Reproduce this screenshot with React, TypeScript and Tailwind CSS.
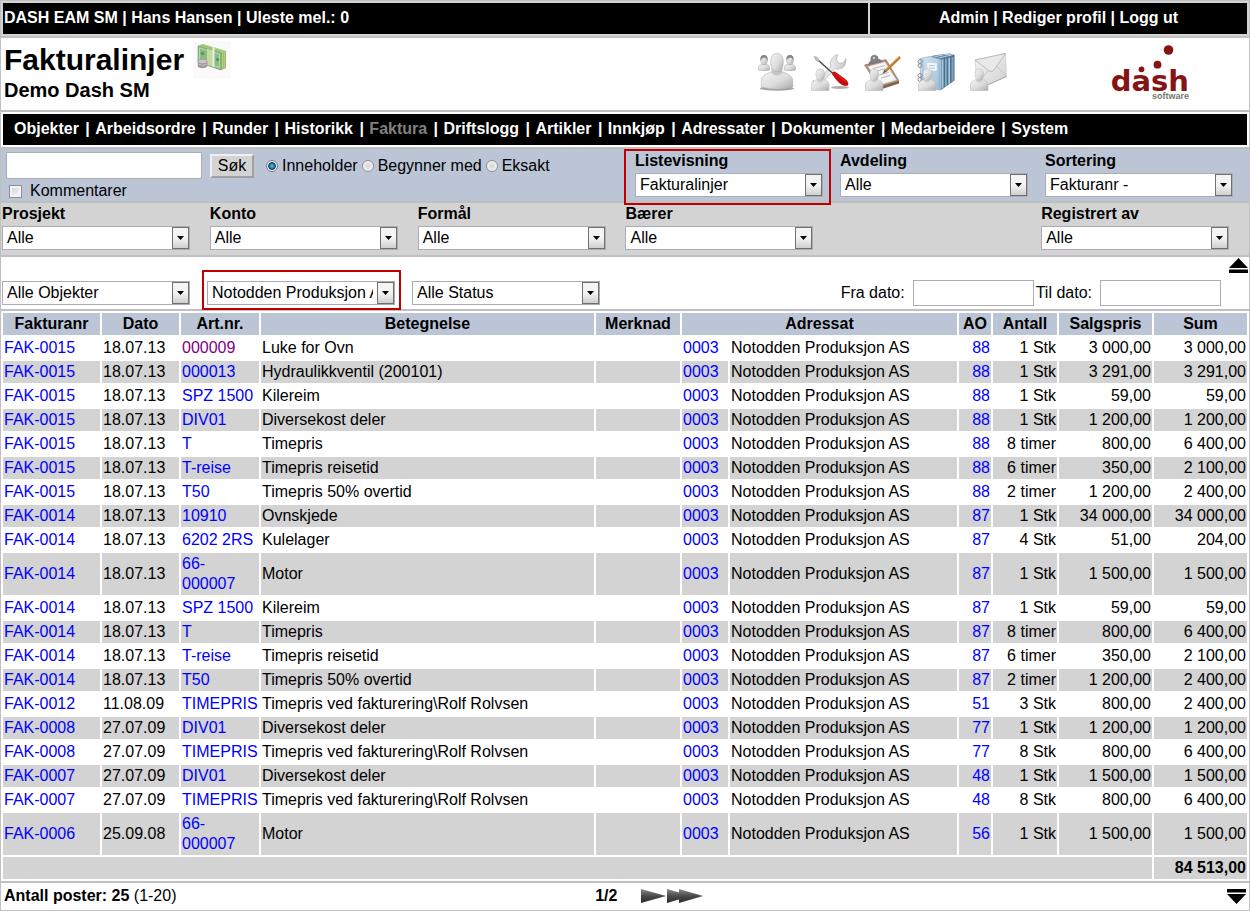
import type { ReactNode } from 'react';

const MENU = [
  'Objekter', 'Arbeidsordre', 'Runder', 'Historikk', 'Faktura', 'Driftslogg', 'Artikler',
  'Innkjøp', 'Adressater', 'Dokumenter', 'Medarbeidere', 'System',
];

type Row = [string, string, string, string, string, string, string, string];

const ROWS: Row[] = [
  ['FAK-0015', '18.07.13', '000009', 'Luke for Ovn', '88', '1 Stk', '3 000,00', '3 000,00'],
  ['FAK-0015', '18.07.13', '000013', 'Hydraulikkventil (200101)', '88', '1 Stk', '3 291,00', '3 291,00'],
  ['FAK-0015', '18.07.13', 'SPZ 1500', 'Kilereim', '88', '1 Stk', '59,00', '59,00'],
  ['FAK-0015', '18.07.13', 'DIV01', 'Diversekost deler', '88', '1 Stk', '1 200,00', '1 200,00'],
  ['FAK-0015', '18.07.13', 'T', 'Timepris', '88', '8 timer', '800,00', '6 400,00'],
  ['FAK-0015', '18.07.13', 'T-reise', 'Timepris reisetid', '88', '6 timer', '350,00', '2 100,00'],
  ['FAK-0015', '18.07.13', 'T50', 'Timepris 50% overtid', '88', '2 timer', '1 200,00', '2 400,00'],
  ['FAK-0014', '18.07.13', '10910', 'Ovnskjede', '87', '1 Stk', '34 000,00', '34 000,00'],
  ['FAK-0014', '18.07.13', '6202 2RS', 'Kulelager', '87', '4 Stk', '51,00', '204,00'],
  ['FAK-0014', '18.07.13', '66-000007', 'Motor', '87', '1 Stk', '1 500,00', '1 500,00'],
  ['FAK-0014', '18.07.13', 'SPZ 1500', 'Kilereim', '87', '1 Stk', '59,00', '59,00'],
  ['FAK-0014', '18.07.13', 'T', 'Timepris', '87', '8 timer', '800,00', '6 400,00'],
  ['FAK-0014', '18.07.13', 'T-reise', 'Timepris reisetid', '87', '6 timer', '350,00', '2 100,00'],
  ['FAK-0014', '18.07.13', 'T50', 'Timepris 50% overtid', '87', '2 timer', '1 200,00', '2 400,00'],
  ['FAK-0012', '11.08.09', 'TIMEPRIS', 'Timepris ved fakturering\\Rolf Rolvsen', '51', '3 Stk', '800,00', '2 400,00'],
  ['FAK-0008', '27.07.09', 'DIV01', 'Diversekost deler', '77', '1 Stk', '1 200,00', '1 200,00'],
  ['FAK-0008', '27.07.09', 'TIMEPRIS', 'Timepris ved fakturering\\Rolf Rolvsen', '77', '8 Stk', '800,00', '6 400,00'],
  ['FAK-0007', '27.07.09', 'DIV01', 'Diversekost deler', '48', '1 Stk', '1 500,00', '1 500,00'],
  ['FAK-0007', '27.07.09', 'TIMEPRIS', 'Timepris ved fakturering\\Rolf Rolvsen', '48', '8 Stk', '800,00', '6 400,00'],
  ['FAK-0006', '25.09.08', '66-000007', 'Motor', '56', '1 Stk', '1 500,00', '1 500,00'],
];

function Select({ id, value, label }: { id: string; value: string; label?: string }) {
  return (
    <div className="relative h-6 w-[188px]">
      <select
        id={id}
        aria-label={label}
        defaultValue={value}
        className="block h-6 w-full appearance-none border border-[#abadb3] bg-white pr-[21px] pl-1 text-base leading-5 text-black"
      >
        <option>{value}</option>
      </select>
      <span className="pointer-events-none absolute top-px right-px flex h-[22px] w-[17px] items-center justify-center border border-[#707070] bg-linear-to-b from-[#f4f4f4] from-50% to-[#cfcfcf]">
        <svg width="7" height="4" viewBox="0 0 7 4" aria-hidden="true">
          <path d="M0 0h7L3.5 4z" fill="#000" />
        </svg>
      </span>
    </div>
  );
}

function Field({ id, label, value, children }: { id: string; label: string; value: string; children?: ReactNode }) {
  return (
    <div className="relative flex flex-col items-start gap-0.5">
      <label htmlFor={id} className="font-bold">{label}</label>
      <Select id={id} value={value} />
      {children}
    </div>
  );
}

function Radio({ label, checked }: { label: string; checked?: boolean }) {
  return (
    <label className="flex items-center gap-1">
      <input
        type="radio"
        name="match"
        defaultChecked={checked}
        className="size-3 appearance-none rounded-full border border-[#8e8f8f] bg-radial from-[#d2d6da] to-[#fafafa] shadow-[inset_0_0_0_1px_#f4f4f4] checked:border-[#6b7f92] checked:from-[#4fb4dc] checked:from-10% checked:via-[#123f63] checked:via-50% checked:to-[#eef2f5] checked:to-60%"
      />
      {label}
    </label>
  );
}

function Gradients() {
  return (
    <svg width="0" height="0" className="absolute" aria-hidden="true">
      <defs>
        <linearGradient id="skin" x1="0" y1="0" x2="1" y2="1">
          <stop offset="0" stopColor="#f4f4f4" />
          <stop offset="0.55" stopColor="#dcdcdc" />
          <stop offset="1" stopColor="#a9a9a9" />
        </linearGradient>
        <linearGradient id="metal" x1="0" y1="0" x2="1" y2="0">
          <stop offset="0" stopColor="#c4c4c4" />
          <stop offset="0.5" stopColor="#ececec" />
          <stop offset="1" stopColor="#c6c6c6" />
        </linearGradient>
        <linearGradient id="cover" x1="0" y1="0" x2="1" y2="1">
          <stop offset="0" stopColor="#d3e4f0" />
          <stop offset="1" stopColor="#9dc0d8" />
        </linearGradient>
        <linearGradient id="paper" x1="0" y1="0" x2="1" y2="1">
          <stop offset="0" stopColor="#f6f6f6" />
          <stop offset="1" stopColor="#d0d0d0" />
        </linearGradient>
        <linearGradient id="play" x1="0" y1="0" x2="0" y2="1">
          <stop offset="0" stopColor="#8a8a8a" />
          <stop offset="0.5" stopColor="#4a4a4a" />
          <stop offset="1" stopColor="#2c2c2c" />
        </linearGradient>
      </defs>
    </svg>
  );
}

function SmallPerson() {
  return (
    <g stroke="#b4b4b4" strokeWidth="0.5">
      <path d="M0.500 37.500V32q0-4 5.500-5.500h6.500q5.500 1.500 5.500 5.500v5.500z" fill="url(#skin)" />
      <path d="M6 24v4q3.200 3 6.400 0v-4z" fill="#cfcfcf" stroke="none" />
      <path d="M9.200 16q4.300 0 4.300 5 0 6-4.300 6.500Q5 27 5 21q0-5 4.200-5z" fill="url(#skin)" />
    </g>
  );
}

function PeopleIcon() {
  return (
    <svg width="38" height="38" viewBox="0 0 38 38" aria-hidden="true">
      <ellipse cx="19" cy="35.500" rx="17" ry="2.200" fill="#7d7d7d" opacity="0.7" />
      <g stroke="#a4a4a4" strokeWidth="0.5">
        <path d="M0.500 17v-2q0-3 3.800-4h3.400q4 1 4 4v2q-5.500 1.500-11.200 0z" fill="url(#skin)" />
        <ellipse cx="6" cy="7" rx="3.300" ry="4.700" fill="url(#skin)" />
        <path d="M2.500 7.500Q1.800 2 6 2t3.500 5.500Q8 4.500 6.500 4.500 4 4.500 2.500 7.500z" fill="#858585" stroke="none" />
        <path d="M26.300 17v-2q0-3 3.800-4h3.400q4 1 4 4v2q-5.500 1.500-11.200 0z" fill="url(#skin)" />
        <ellipse cx="32" cy="7" rx="3.300" ry="4.700" fill="url(#skin)" />
        <path d="M28.500 7.500Q27.800 2 32 2t3.500 5.500Q34 4.500 32.500 4.500 30 4.500 28.500 7.500z" fill="#858585" stroke="none" />
        <path d="M3.300 34v-6.500q0-5.500 9.700-8.500h12q9.700 3 9.700 8.500V34q-15.700 4.500-31.400 0z" fill="url(#skin)" />
        <path d="M13.500 15v5q5.500 5 11 0v-5z" fill="#c6c6c6" stroke="none" />
        <path d="M19 0.500q6.300 0 6.300 8.500 0 9.500-6.300 10-6.300-0.500-6.300-10 0-8.500 6.300-8.500z" fill="url(#skin)" />
      </g>
    </svg>
  );
}

function ToolsIcon() {
  return (
    <svg width="38" height="38" viewBox="0 0 38 38" aria-hidden="true">
      <ellipse cx="29" cy="34.500" rx="9" ry="1.500" fill="#8a8a8a" opacity="0.7" />
      <path
        d="M3 31L19.500 14q-1.500-5.500 2-9 1.500-3 5-3.500l-1 5.500 2.500 3.500 4.500-1L35 5.500q0 3-0.500 5.500-2 4.500-6 5-2.500 0.500-4.500-0.500L7.500 34z"
        fill="url(#metal)" stroke="#adadad" strokeWidth="0.600"
      />
      <path d="M2 28l2.500 2" stroke="#444" strokeWidth="1.400" />
      <path d="M7 7l15.500 14" stroke="#4d4d4d" strokeWidth="1.500" />
      <path d="M3.500 3.500l2.500 0.800 2.500 3.200-1.500 1.200-3-2.500z" fill="#c2c2c2" stroke="#8f8f8f" strokeWidth="0.500" />
      <path d="M21 21q0-2.500 3-2.500l11.500 8.500q2.500 3 1.500 5.500l-3 0.500q-6-1-13-12z" fill="#c80d0d" />
      <path d="M24 20l11.500 9" stroke="#e22" strokeWidth="1" />
      <SmallPerson />
    </svg>
  );
}

function ClipboardIcon() {
  return (
    <svg width="38" height="38" viewBox="0 0 38 38" aria-hidden="true">
      <path d="M0.500 12L22 6.500 35 28 15 34z" fill="#b0917c" stroke="#8a6a54" strokeWidth="0.600" />
      <path d="M35 28v2.500L15 37v-3z" fill="#80604b" />
      <path d="M4 13.500L21 9l11.500 18-17 5z" fill="#f7f7f7" stroke="#c9c9c9" strokeWidth="0.500" />
      <path d="M9 15.500l12-3M11 18.500l10-2.800M15 22l9.500-2.500M17 25l9-2.500" stroke="#b8b8b8" strokeWidth="1" />
      <path d="M5 11.500q-0.500-2.500 2-3.800-1-5 3-5.500 4.500 0 4 4 3-0.200 3.500 2.300z" fill="#808080" stroke="#606060" strokeWidth="0.500" />
      <circle cx="10" cy="5" r="1.200" fill="#d0d0d0" />
      <path d="M36 4L21.500 18" stroke="#b8742b" strokeWidth="2.600" />
      <path d="M35.500 3.600L21 17.500" stroke="#e5a259" strokeWidth="1" />
      <path d="M20.500 16.500l2 2.200-4 2z" fill="#555" />
      <g transform="translate(1 0)"><SmallPerson /></g>
    </svg>
  );
}

function BooksIcon() {
  return (
    <svg width="38" height="38" viewBox="0 0 38 38" aria-hidden="true">
      <path d="M16 2.500L33 0.500 37.500 2v25.500L24 37z" fill="#4a6f8a" />
      <path d="M12 3.500L31 0.800l6 1-13 4z" fill="#b7d0e0" />
      <path d="M24.500 6.500l2-0.500v28.500l-2 1.500z" fill="#a9c9de" />
      <path d="M28 5.800l1.800-0.400v27L28 33.800z" fill="#86adc8" />
      <path d="M31.300 5l1.700-0.400v25.600l-1.700 1.200z" fill="#a9c9de" />
      <path d="M34.500 4.200L36.500 3.800v23.800l-2 1.400z" fill="#7ba3bf" />
      <path d="M15 3.500l12 2.500M20 2.800l11 2.300M25 2l10 2" stroke="#55809e" strokeWidth="0.900" />
      <path d="M3 5.500l10-2 11 3v30.500L4 35z" fill="url(#cover)" stroke="#7fa5bf" strokeWidth="0.600" />
      <path d="M6 6v29M22 7v29.500" stroke="#84aac4" strokeWidth="0.700" />
      <path d="M10 9.500l10 0.500v8l-10-0.500z" fill="#f4f8fa" stroke="#b5cad8" strokeWidth="0.400" />
      <path d="M12 12.500l6 0.300M12 15l6 0.300" stroke="#9cb5c5" strokeWidth="0.800" />
      <g fill="none" stroke="#808890" strokeWidth="0.900">
        <circle cx="3" cy="8.500" r="2" /><circle cx="3" cy="12.500" r="2" />
        <circle cx="3" cy="22.500" r="2" /><circle cx="3" cy="26.500" r="2" />
      </g>
      <g transform="translate(1 0)"><SmallPerson /></g>
    </svg>
  );
}

function MailIcon() {
  return (
    <svg width="38" height="38" viewBox="0 0 38 38" aria-hidden="true">
      <path d="M5 7L35.500 0.500l1 23L13 34 7 30z" fill="url(#paper)" stroke="#c4c4c4" strokeWidth="0.600" />
      <path d="M7 30l12-13M36.500 23.500L26 12.500" stroke="#bdbdbd" strokeWidth="0.800" />
      <path d="M5 7L35.500 0.500 24 17q-2 2.500-4.500 1z" fill="#e9e9e9" stroke="#b0b0b0" strokeWidth="0.800" />
      <path d="M13 34l23.500-10.500" stroke="#a8a8a8" strokeWidth="1" />
      <SmallPerson />
    </svg>
  );
}

function MoneyIcon() {
  return (
    <svg width="38" height="37" viewBox="0 0 38 37" aria-hidden="true">
      <rect width="38" height="37" fill="#fafafa" />
      <path d="M5 5l5-2 23 7v17l-5 2L5 21z" fill="#9bc070" />
      <path d="M5 5l5-2 23 7-5 2z" fill="#bcd694" />
      <path d="M6.500 4.300l22.500 7M8 3.800l22.500 7" stroke="#86ab5a" strokeWidth="0.500" />
      <path d="M28 12l5-2v17l-5 2z" fill="#97bb66" />
      <path d="M29.500 11.500v17M31.300 10.800v17" stroke="#c4db9a" strokeWidth="0.700" />
      <path d="M5 5l23 7v17L5 21z" fill="#8dbb86" stroke="#6b9e5b" strokeWidth="0.600" />
      <path d="M6.500 7l20 6v13.500l-20-6.500z" fill="none" stroke="#c2dfb8" strokeWidth="0.800" />
      <path d="M14 7.800l6 1.800v16l-6-2z" fill="#c6dc98" />
      <path d="M19.500 6l2 0.700V26l-2-0.600z" fill="#e0eef2" />
      <circle cx="9.500" cy="12.500" r="1.800" fill="#5c9662" />
      <circle cx="24.500" cy="18.500" r="1.800" fill="#5c9662" />
      <path d="M5 20.500v5q4.500 3 9 0v-5z" fill="#a898a6" stroke="#8b7b8a" strokeWidth="0.500" />
      <ellipse cx="9.500" cy="20.500" rx="4.500" ry="2.200" fill="#cfc3cc" stroke="#93858f" strokeWidth="0.500" />
      <path d="M5 23q4.500 3 9 0" stroke="#d9d0d6" strokeWidth="0.600" fill="none" />
    </svg>
  );
}

function Logo() {
  return (
    <svg width="82" height="57" viewBox="0 0 82 57" role="img" aria-label="dash software">
      <circle cx="60.500" cy="6" r="4.800" fill="#861414" />
      <circle cx="49.500" cy="20.700" r="3.900" fill="#861414" />
      <circle cx="33.500" cy="25.300" r="2.900" fill="#861414" />
      <text x="81" y="47" textAnchor="end" fontFamily="DejaVu Sans" fontWeight="700" fontSize="29" fill="#861414">dash</text>
      <text x="81" y="55" textAnchor="end" fontFamily="Liberation Sans" fontWeight="700" fontSize="9" fill="#77776b">software</text>
    </svg>
  );
}

const SHORTCUTS: { label: string; icon: ReactNode }[] = [
  { label: 'Medarbeidere', icon: <PeopleIcon /> },
  { label: 'Arbeidsordre', icon: <ToolsIcon /> },
  { label: 'Runder', icon: <ClipboardIcon /> },
  { label: 'Dokumenter', icon: <BooksIcon /> },
  { label: 'Meldinger', icon: <MailIcon /> },
];

export default function App() {
  return (
    <div className="border border-[#c0c0c0] bg-white font-['Liberation_Sans',Arial,sans-serif] text-base leading-5 text-black">
      <Gradients />

      <div className="flex gap-0.5 border-b-2 border-[#c0c0c0] bg-[#d3d3d3] p-0.5 font-bold text-white">
        <div className="flex-1 bg-black px-px pt-[5px] pb-1.5">DASH EAM SM | Hans Hansen | Uleste mel.: 0</div>
        <nav className="w-[30.3%] bg-black pt-[5px] pb-1.5 text-center">
          <a href="#admin">Admin</a> | <a href="#profil">Rediger profil</a> | <a href="#logout">Logg ut</a>
        </nav>
      </div>

      <header className="flex items-start border-b-2 border-[#c0c0c0] pr-[59px] pb-2 pl-[3px]">
        <div className="flex-1">
          <div className="flex items-start gap-[9px]">
            <h1 className="pt-1 text-[30px] leading-9 font-bold">Fakturalinjer</h1>
            <span className="pt-[3px]"><MoneyIcon /></span>
          </div>
          <h2 className="text-xl leading-6 font-bold">Demo Dash SM</h2>
        </div>
        <nav className="flex gap-[15px] pt-[15px]">
          {SHORTCUTS.map((s) => (
            <a key={s.label} href="#snarvei" aria-label={s.label}>{s.icon}</a>
          ))}
        </nav>
        <div className="pt-1.5 pl-[100px]"><Logo /></div>
      </header>

      <div className="border-b-2 border-[#c0c0c0] p-0.5">
        <nav className="bg-black pt-[5px] pb-1.5 pl-[11px] font-bold text-white">
          {MENU.map((item, i) => (
            <span key={item}>
              {i > 0 && <span className="mr-px ml-0.5"> | </span>}
              <a href="#meny" className={item === 'Faktura' ? 'text-[#808080]' : ''}>{item}</a>
            </span>
          ))}
        </nav>
      </div>

      <div className="flex items-start border-b-2 border-[#c0c0c0] bg-[#bbc5d6] pr-4">
        <div className="flex-1 pt-[3px] pl-[5px]">
          <div className="flex items-center">
            <input type="text" aria-label="Søketekst" className="h-[27px] w-[196px] border border-[#abadb3] bg-white px-1" />
            <button type="button" className="ml-2 h-6 w-11 border-2 border-t-[#f0f0f0] border-r-[#a0a0a0] border-b-[#a0a0a0] border-l-[#f0f0f0] bg-[#d3d3d3] leading-5">
              Søk
            </button>
            <div className="ml-3 flex gap-1">
              <Radio label="Inneholder" checked />
              <Radio label="Begynner med" />
              <Radio label="Eksakt" />
            </div>
          </div>
          <label className="flex items-center gap-2 pt-0.5 pl-[3px]">
            <input
              type="checkbox"
              className="size-[13px] appearance-none border border-[#8e8f8f] bg-linear-to-br from-[#cfd3d8] to-[#f8f8f8] shadow-[inset_0_0_0_2px_#f4f4f4] checked:bg-[#123f63]"
            />
            Kommentarer
          </label>
        </div>
        <div className="flex gap-[17px] pt-0.5 pb-1">
          <Field id="listevisning" label="Listevisning" value="Fakturalinjer">
            <span className="pointer-events-none absolute -top-0.5 -right-2 -bottom-2 -left-[11px] z-10 border-2 border-[#c00000]" />
          </Field>
          <Field id="avdeling" label="Avdeling" value="Alle" />
          <Field id="sortering" label="Sortering" value="Fakturanr -" />
        </div>
      </div>

      <div className="grid grid-cols-6 border-b-2 border-[#c0c0c0] bg-[#d3d3d3] pt-px pb-[5px] pl-px">
        <Field id="prosjekt" label="Prosjekt" value="Alle" />
        <Field id="konto" label="Konto" value="Alle" />
        <Field id="formal" label="Formål" value="Alle" />
        <Field id="baerer" label="Bærer" value="Alle" />
        <div className="col-start-6">
          <Field id="registrert" label="Registrert av" value="Alle" />
        </div>
      </div>

      <div className="relative flex items-center gap-[17px] border-b-2 border-[#c0c0c0] pt-[23px] pr-7 pb-[3px] pl-px">
        <Select id="objekter" label="Objekter" value="Alle Objekter" />
        <div className="relative">
          <Select id="adressat" label="Adressat" value="Notodden Produksjon AS" />
          <span className="pointer-events-none absolute -top-[11px] -right-1.5 -bottom-[5px] -left-[5px] z-10 border-2 border-[#c00000]" />
        </div>
        <Select id="status" label="Status" value="Alle Status" />
        <div className="ml-auto flex items-center">
          <label htmlFor="fra" className="pr-2">Fra dato:</label>
          <input id="fra" type="text" className="h-[26px] w-[121px] border border-[#abadb3] bg-white px-1" />
          <label htmlFor="til" className="pr-2 pl-0.5">Til dato:</label>
          <input id="til" type="text" className="h-[26px] w-[121px] border border-[#abadb3] bg-white px-1" />
        </div>
        <button type="button" aria-label="Til toppen" className="absolute top-px right-px">
          <svg width="19" height="15" viewBox="0 0 19 15" className="block" aria-hidden="true">
            <path d="M9.500 0L19 10H0zM0 11.500h19V15H0z" fill="#000" />
          </svg>
        </button>
      </div>

      <table className="w-full table-fixed border-separate border-spacing-0.5">
        <colgroup>
          <col className="w-[97px]" />
          <col className="w-[77px]" />
          <col className="w-[78px]" />
          <col />
          <col className="w-[84px]" />
          <col className="w-[46px]" />
          <col className="w-[227px]" />
          <col className="w-8" />
          <col className="w-16" />
          <col className="w-[93px]" />
          <col className="w-[93px]" />
        </colgroup>
        <thead>
          <tr className="bg-[#bbc5d6] [&>th]:p-px">
            <th>Fakturanr</th>
            <th>Dato</th>
            <th>Art.nr.</th>
            <th>Betegnelse</th>
            <th>Merknad</th>
            <th colSpan={2}>Adressat</th>
            <th>AO</th>
            <th>Antall</th>
            <th>Salgspris</th>
            <th>Sum</th>
          </tr>
        </thead>
        <tbody>
          {ROWS.map(([faktura, dato, art, tekst, ao, antall, pris, sum], i) => (
            <tr key={i} className="even:bg-[#d3d3d3] [&>td]:p-px">
              <td><a href="#faktura" className="text-[#0000ff]">{faktura}</a></td>
              <td>{dato}</td>
              <td><a href="#artikkel" className={i === 0 ? 'text-[#800080]' : 'text-[#0000ff]'}>{art}</a></td>
              <td>{tekst}</td>
              <td />
              <td><a href="#adressat" className="text-[#0000ff]">0003</a></td>
              <td>Notodden Produksjon AS</td>
              <td className="text-right"><a href="#ao" className="text-[#0000ff]">{ao}</a></td>
              <td className="text-right">{antall}</td>
              <td className="text-right">{pris}</td>
              <td className="text-right">{sum}</td>
            </tr>
          ))}
        </tbody>
        <tfoot>
          <tr className="bg-[#d3d3d3] font-bold [&>td]:p-px">
            <td colSpan={10} />
            <td className="text-right">84 513,00</td>
          </tr>
        </tfoot>
      </table>

      <footer className="flex items-center border-t-2 border-[#c0c0c0] pt-[3px] pr-[3px] pb-1 pl-[3px]">
        <div className="w-[47.6%]"><b>Antall poster: 25</b> (1-20)</div>
        <b>1/2</b>
        <div className="flex pl-6">
          <button type="button" aria-label="Neste side">
            <svg width="25" height="14" viewBox="0 0 25 14" className="block" aria-hidden="true">
              <path d="M0 0l25 7L0 14z" fill="url(#play)" />
            </svg>
          </button>
          <button type="button" aria-label="Siste side">
            <svg width="37" height="14" viewBox="0 0 37 14" className="block" aria-hidden="true">
              <path d="M1 0l12 3.500V0l24 7-24 7v-3.500L1 14z" fill="url(#play)" />
            </svg>
          </button>
        </div>
        <button type="button" aria-label="Til bunnen" className="ml-auto">
          <svg width="19" height="15" viewBox="0 0 19 15" className="block" aria-hidden="true">
            <path d="M0 0h19v3.500H0zM0 5h19L9.500 15z" fill="#000" />
          </svg>
        </button>
      </footer>
    </div>
  );
}
